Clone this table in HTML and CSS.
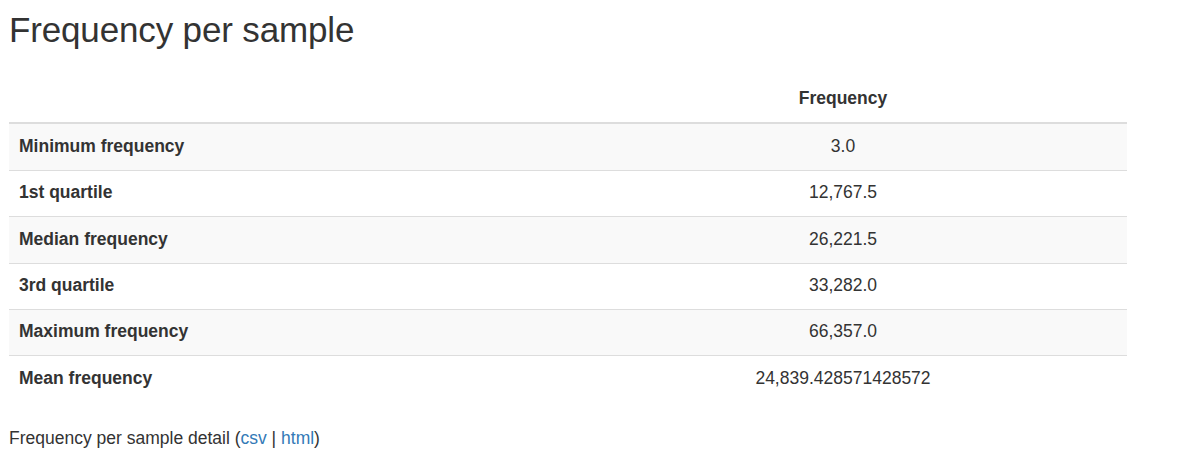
FILE: index.html
```html
<!DOCTYPE html>
<html>
<head>
<meta charset="utf-8">
<link rel="stylesheet" href="styles.css">
</head>
<body>
<div class="page">
  <h2 class="title">Frequency per sample</h2>
  <table class="stats">
    <thead>
      <tr><th class="label-col"></th><th class="value-col">Frequency</th></tr>
    </thead>
    <tbody>
      <tr><th>Minimum frequency</th><td>3.0</td></tr>
      <tr><th>1st quartile</th><td>12,767.5</td></tr>
      <tr><th>Median frequency</th><td>26,221.5</td></tr>
      <tr><th>3rd quartile</th><td>33,282.0</td></tr>
      <tr><th>Maximum frequency</th><td>66,357.0</td></tr>
      <tr><th>Mean frequency</th><td>24,839.428571428572</td></tr>
    </tbody>
  </table>
  <p class="detail">Frequency per sample detail (<a href="#">csv</a> | <a href="#">html</a>)</p>
</div>
</body>
</html>
```
FILE: styles.css
```css
html, body {
  margin: 0;
  padding: 0;
  background: #fff;
}
body {
  font-family: "Liberation Sans", Arial, Helvetica, sans-serif;
  font-size: 17.5px;
  line-height: 25px;
  color: #333;
}
.page {
  padding-left: 9px;
  width: 1118px;
}
.title {
  margin: 10.5px 0 0 0;
  font-size: 35px;
  line-height: 38.5px;
  letter-spacing: -0.15px;
  font-weight: 500;
  color: #333;
}
.stats {
  margin-top: 28px;
  width: 1118px;
  border-collapse: collapse;
  border-spacing: 0;
}
.stats th, .stats td {
  padding: 9.4px 10px 11px 10px;
  line-height: 25px;
  vertical-align: top;
  border-top: 1px solid #ddd;
}
.stats tbody th {
  text-align: left;
  font-weight: bold;
}
.stats tbody td {
  text-align: center;
}
.stats thead th {
  padding: 9px 10px 11.4px 10px;
  border-top: 0;
  border-bottom: 2px solid #ddd;
  vertical-align: bottom;
  font-weight: bold;
  text-align: center;
}
.stats thead .label-col {
  width: 530px;
}
.stats tbody tr:nth-child(odd) {
  background: #f9f9f9;
}
.stats tbody tr:first-child th,
.stats tbody tr:first-child td {
  border-top: 0;
}
.detail {
  margin: 24px 0 0 0;
}
.detail a {
  color: #337ab7;
  text-decoration: none;
}
```
